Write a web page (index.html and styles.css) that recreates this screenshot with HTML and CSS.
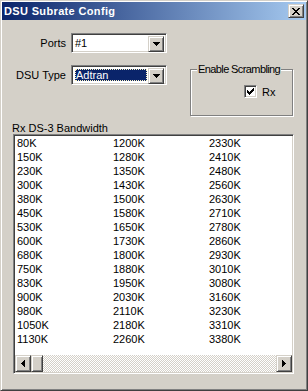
FILE: index.html
```html
<!DOCTYPE html>
<html lang="en">
<head>
    <meta charset="UTF-8">
    <title>DSU Subrate Config</title>
    <link rel="stylesheet" href="styles.css">
</head>
<body>

    <div class="ventana">
        <div class="titulo">
            <span class="tituloTexto">DSU Subrate Config</span>
            <span class="botonCerrar raised">
                <svg width="8" height="7" viewBox="0 0 8 7"><path d="M0 0h2v1H0zM6 0h2v1H6zM1 1h2v1H1zM5 1h2v1H5zM2 2h4v1H2zM3 3h2v1H3zM2 4h4v1H2zM1 5h2v1H1zM5 5h2v1H5zM0 6h2v1H0zM6 6h2v1H6z"/></svg>
            </span>
        </div>

        <div class="contenido">
            <div class="arriba">
                <div class="campos">
                    <span class="etiqueta">Ports</span>
                    <div class="combo sunken">
                        <span class="comboTexto">#1</span>
                        <span class="comboBoton raised">
                            <svg width="7" height="4" viewBox="0 0 7 4"><path d="M0 0h7v1H0zM1 1h5v1H1zM2 2h3v1H2zM3 3h1v1H3z"/></svg>
                        </span>
                    </div>
                    <span class="etiqueta">DSU Type</span>
                    <div class="combo sunken">
                        <span class="comboTexto"><span class="seleccion">Adtran</span></span>
                        <span class="comboBoton raised">
                            <svg width="7" height="4" viewBox="0 0 7 4"><path d="M0 0h7v1H0zM1 1h5v1H1zM2 2h3v1H2zM3 3h1v1H3z"/></svg>
                        </span>
                    </div>
                </div>

                <div class="grupo">
                    <span class="leyenda">Enable Scrambling</span>
                    <div class="check">
                        <span class="casilla sunken">
                            <svg width="7" height="7" viewBox="0 0 7 7"><path d="M6 0h1v1H6zM5 1h2v1H5zM0 2h1v1H0zM4 2h3v1H4zM0 3h2v1H0zM3 3h3v1H3zM0 4h5v1H0zM1 5h3v1H1zM2 6h1v1H2z"/></svg>
                        </span>
                        <span>Rx</span>
                    </div>
                </div>
            </div>

            <div class="listaTitulo">Rx DS-3 Bandwidth</div>

            <div class="lista sunken">
                <div class="items">
                    <div>80K</div><div>150K</div><div>230K</div><div>300K</div><div>380K</div>
                    <div>450K</div><div>530K</div><div>600K</div><div>680K</div><div>750K</div>
                    <div>830K</div><div>900K</div><div>980K</div><div>1050K</div><div>1130K</div>
                    <div>1200K</div><div>1280K</div><div>1350K</div><div>1430K</div><div>1500K</div>
                    <div>1580K</div><div>1650K</div><div>1730K</div><div>1800K</div><div>1880K</div>
                    <div>1950K</div><div>2030K</div><div>2110K</div><div>2180K</div><div>2260K</div>
                    <div>2330K</div><div>2410K</div><div>2480K</div><div>2560K</div><div>2630K</div>
                    <div>2710K</div><div>2780K</div><div>2860K</div><div>2930K</div><div>3010K</div>
                    <div>3080K</div><div>3160K</div><div>3230K</div><div>3310K</div><div>3380K</div>
                </div>
                <div class="scroll">
                    <span class="flecha raised">
                        <svg width="4" height="7" viewBox="0 0 4 7"><path d="M3 0h1v7H3zM2 1h1v5H2zM1 2h1v3H1zM0 3h1v1H0z"/></svg>
                    </span>
                    <span class="pulgar raised"></span>
                    <span class="pista"></span>
                    <span class="flecha raised">
                        <svg width="4" height="7" viewBox="0 0 4 7"><path d="M0 0h1v7H0zM1 1h1v5H1zM2 2h1v3H2zM3 3h1v1H3z"/></svg>
                    </span>
                </div>
            </div>
        </div>
    </div>

</body>
</html>
```

FILE: styles.css
```css
*{
    box-sizing: border-box;
}

body{
    margin: 0;
    background-color: #d4d0c8;
    font-family: "Liberation Sans", Arial, sans-serif;
    font-size: 11px;
    color: black;
}

/* bordes 3D estilo clasico */
.raised{
    border: 1px solid;
    border-color: #d4d0c8 #404040 #404040 #d4d0c8;
    box-shadow: inset 1px 1px #ffffff, inset -1px -1px #808080;
    background-color: #d4d0c8;
}

.sunken{
    border: 1px solid;
    border-color: #808080 #ffffff #ffffff #808080;
    box-shadow: inset 1px 1px #404040, inset -1px -1px #d4d0c8;
    background-color: white;
}

.ventana{
    width: 308px;
    height: 391px;
    padding: 1px;
    border: 1px solid;
    border-color: #d4d0c8 #404040 #404040 #d4d0c8;
    box-shadow: inset 1px 1px #ffffff, inset -1px -1px #808080;
    background-color: #d4d0c8;
}

.titulo{
    height: 18px;
    display: flex;
    align-items: center;
    justify-content: space-between;
    padding: 0 2px 0 2px;
    background: linear-gradient(to right, #0a246a, #a6caf0);
}

.tituloTexto{
    color: white;
    font-weight: bold;
    font-size: 11px;
    letter-spacing: 0.35px;
}

.botonCerrar{
    width: 16px;
    height: 14px;
    display: flex;
    align-items: center;
    justify-content: center;
    padding-right: 1px;
}

.contenido{
    padding: 13px 10px 0 10px;
}

.arriba{
    display: flex;
}

.campos{
    display: grid;
    grid-template-columns: 54px 96px;
    grid-template-rows: 20px 20px;
    column-gap: 5px;
    row-gap: 12px;
}

.etiqueta{
    align-self: center;
    text-align: right;
}

.combo{
    display: flex;
    padding: 2px;
}

.comboTexto{
    flex: 1;
    display: flex;
    align-items: center;
    padding: 1px;
}

.seleccion{
    flex: 1;
    height: 100%;
    display: flex;
    align-items: center;
    padding-left: 1px;
    background-color: #0a246a;
    color: white;
    outline: 1px dotted #fff5c0;
    outline-offset: -1px;
}

.comboBoton{
    width: 16px;
    height: 16px;
    display: flex;
    align-items: center;
    justify-content: center;
}

.grupo{
    width: 103px;
    height: 47px;
    margin: 36px 0 0 23px;
    border: 1px solid #808080;
    box-shadow: 1px 1px 0 #ffffff, inset 1px 1px 0 #ffffff;
}

.leyenda{
    display: table;
    margin: -7px 0 0 6px;
    padding: 0 1px;
    line-height: 13px;
    letter-spacing: -0.6px;
    background-color: #d4d0c8;
}

.check{
    display: flex;
    align-items: center;
    gap: 5px;
    margin: 9px 0 0 53px;
}

.casilla{
    width: 13px;
    height: 13px;
    display: flex;
    align-items: center;
    justify-content: center;
}

.listaTitulo{
    margin-top: 6px;
    line-height: 12px;
}

.lista{
    width: 281px;
    height: 240px;
    margin-left: 1px;
    padding: 1px;
    display: flex;
    flex-direction: column;
}

.items{
    flex: 1;
    display: grid;
    grid-auto-flow: column;
    grid-template-rows: repeat(15, 14px);
    grid-auto-columns: 96px;
    align-content: start;
}

.items div{
    padding-left: 2px;
    line-height: 14px;
}

.scroll{
    height: 17px;
    display: flex;
}

.flecha{
    width: 16px;
    height: 17px;
    display: flex;
    align-items: center;
    justify-content: center;
}

.pulgar{
    width: 12px;
    height: 17px;
}

.pista{
    flex: 1;
    background: repeating-conic-gradient(#d4d0c8 0 25%, #ffffff 0 50%) 0 0 / 2px 2px;
}
```
